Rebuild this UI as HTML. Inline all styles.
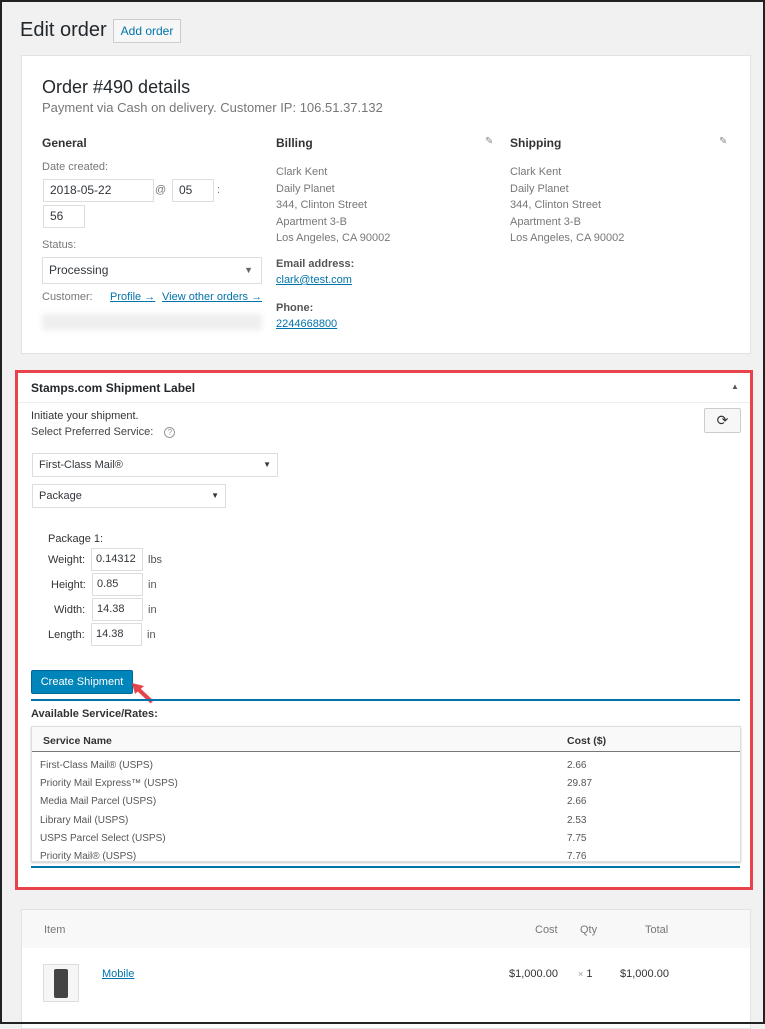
<!DOCTYPE html>
<html><head><meta charset="utf-8"><style>
*{margin:0;padding:0;box-sizing:border-box}
body{width:765px;height:1024px;background:#f1f1f1;font-family:"Liberation Sans",sans-serif;position:relative;overflow:hidden;color:#23282d}
.a{position:absolute;white-space:nowrap}
.card{position:absolute;background:#fff;border:1px solid #e2e2e2}
.in{position:absolute;border:1px solid #ddd;background:#fff;font-size:12px;padding-left:6px;line-height:20px;color:#32373c}
.g{color:#777;font-size:11px}
.lk{color:#0073aa;text-decoration:underline;font-size:11px}
.s{font-size:10px;color:#555}
</style></head><body>
<div class="a" style="left:20px;top:19px;font-size:20px;color:#23282d">Edit order</div>
<div class="a" style="left:113px;top:19px;width:68px;height:24px;border:1px solid #ccc;background:#f7f7f7;color:#0073aa;font-size:12px;text-align:center;line-height:22px">Add order</div>

<div class="card" style="left:21px;top:55px;width:730px;height:299px">
<div class="a" style="left:20px;top:21px;font-size:18px;color:#23282d">Order #490 details</div>
<div class="a" style="left:20px;top:44px;font-size:13px;color:#777">Payment via Cash on delivery. Customer IP: 106.51.37.132</div>
<div class="a" style="left:20px;top:80px;font-size:12px;font-weight:bold;color:#333">General</div>
<div class="a g" style="left:20px;top:105px">Date created:</div>
<div class="in" style="left:21px;top:123px;width:111px;height:23px">2018-05-22</div>
<div class="a g" style="left:133px;top:128px">@</div>
<div class="in" style="left:150px;top:123px;width:42px;height:23px">05</div>
<div class="a g" style="left:195px;top:128px">:</div>
<div class="in" style="left:21px;top:149px;width:42px;height:23px">56</div>
<div class="a g" style="left:20px;top:183px">Status:</div>
<div class="in" style="left:20px;top:201px;width:220px;height:27px;line-height:25px">Processing<span style="position:absolute;right:8px;font-size:9px;color:#666">▼</span></div>
<div class="a g" style="left:20px;top:235px">Customer:</div>
<div class="a lk" style="left:88px;top:235px">Profile →</div>
<div class="a lk" style="left:140px;top:235px">View other orders →</div>
<div class="a" style="left:20px;top:258px;width:220px;height:16px;background:#eee;filter:blur(3px)"></div>
<div class="a" style="left:254px;top:80px;font-size:12px;font-weight:bold;color:#333">Billing</div>
<div class="a" style="left:463px;top:80px;font-size:10px;color:#888">✎</div>
<div class="a g" style="left:254px;top:108px;line-height:16.5px">Clark Kent<br>Daily Planet<br>344, Clinton Street<br>Apartment 3-B<br>Los Angeles, CA 90002</div>
<div class="a" style="left:254px;top:202px;font-size:11px;font-weight:bold;color:#555">Email address:</div>
<div class="a lk" style="left:254px;top:218px">clark@test.com</div>
<div class="a" style="left:254px;top:246px;font-size:11px;font-weight:bold;color:#555">Phone:</div>
<div class="a lk" style="left:254px;top:262px">2244668800</div>
<div class="a" style="left:488px;top:80px;font-size:12px;font-weight:bold;color:#333">Shipping</div>
<div class="a" style="left:697px;top:80px;font-size:10px;color:#888">✎</div>
<div class="a g" style="left:488px;top:108px;line-height:16.5px">Clark Kent<br>Daily Planet<br>344, Clinton Street<br>Apartment 3-B<br>Los Angeles, CA 90002</div>
</div>

<div class="a" style="left:15px;top:370px;width:738px;height:520px;border:3px solid #e8434b;background:#fff"></div>
<div class="a" style="left:18px;top:402px;width:732px;height:1px;background:#eee"></div>
<div class="a" style="left:31px;top:381px;font-size:12px;font-weight:bold;color:#23282d">Stamps.com Shipment Label</div>
<div class="a" style="left:731px;top:382px;font-size:8px;color:#555">▲</div>
<div class="a" style="left:31px;top:410px;font-size:11px;color:#333">Initiate your shipment.</div>
<div class="a" style="left:31px;top:426px;font-size:11px;color:#444">Select Preferred Service: <span style="display:inline-block;width:11px;height:11px;border:1px solid #999;border-radius:50%;font-size:8px;text-align:center;line-height:10px;color:#999;margin-left:8px">?</span></div>
<div class="a" style="left:704px;top:408px;width:37px;height:25px;border:1px solid #ccc;background:#f7f7f7;border-radius:2px;text-align:center;line-height:23px;font-size:14px;color:#333">⟳</div>
<div class="in" style="left:32px;top:453px;width:246px;height:24px;line-height:22px;font-size:11px">First-Class Mail®<span style="position:absolute;right:6px;font-size:8px">▼</span></div>
<div class="in" style="left:32px;top:484px;width:194px;height:24px;line-height:22px;font-size:11px">Package<span style="position:absolute;right:6px;font-size:8px">▼</span></div>
<div class="a" style="left:48px;top:533px;font-size:11px;color:#333">Package 1:</div>
<div class="a" style="left:48px;top:554px;font-size:11px;color:#333">Weight:</div>
<div class="in" style="left:91px;top:548px;width:52px;height:23px;padding-left:4px;font-size:11px">0.14312</div>
<div class="a" style="left:148px;top:554px;font-size:11px;color:#555">lbs</div>
<div class="a" style="left:51px;top:579px;font-size:11px;color:#333">Height:</div>
<div class="in" style="left:92px;top:573px;width:51px;height:23px;padding-left:4px;font-size:11px">0.85</div>
<div class="a" style="left:148px;top:579px;font-size:11px;color:#555">in</div>
<div class="a" style="left:54px;top:604px;font-size:11px;color:#333">Width:</div>
<div class="in" style="left:92px;top:598px;width:51px;height:23px;padding-left:4px;font-size:11px">14.38</div>
<div class="a" style="left:148px;top:604px;font-size:11px;color:#555">in</div>
<div class="a" style="left:48px;top:629px;font-size:11px;color:#333">Length:</div>
<div class="in" style="left:91px;top:623px;width:51px;height:23px;padding-left:4px;font-size:11px">14.38</div>
<div class="a" style="left:147px;top:629px;font-size:11px;color:#555">in</div>
<div class="a" style="left:31px;top:670px;width:102px;height:24px;background:#0085ba;border:1px solid #006799;border-radius:2px;color:#fff;font-size:11px;text-align:center;line-height:22px">Create Shipment</div>
<svg class="a" style="left:128px;top:680px" width="26" height="24"><path d="M24 22 L10 9" stroke="#e8434b" stroke-width="4"/><path d="M4 3 L16 6 L7 14Z" fill="#e8434b"/></svg>
<div class="a" style="left:31px;top:699px;width:709px;height:2px;background:#0073aa"></div>
<div class="a" style="left:31px;top:708px;font-size:11px;font-weight:bold;color:#333">Available Service/Rates:</div>
<div class="a" style="left:31px;top:726px;width:710px;height:136px;border:1px solid #ddd;box-shadow:0 1px 2px #ccc;background:#fff">
<div class="a" style="left:0;top:0;width:708px;height:25px;background:#f9f9f9;border-bottom:1px solid #777"></div>
<div class="a" style="left:11px;top:8px;font-size:10.5px;font-weight:bold;color:#333">Service Name</div>
<div class="a" style="left:535px;top:8px;font-size:10.5px;font-weight:bold;color:#333">Cost ($)</div>
<div class="a s" style="left:8px;top:30px;line-height:18.2px">First-Class Mail® (USPS)<br>Priority Mail Express™ (USPS)<br>Media Mail Parcel (USPS)<br>Library Mail (USPS)<br>USPS Parcel Select (USPS)<br>Priority Mail® (USPS)</div>
<div class="a s" style="left:535px;top:30px;line-height:18.2px">2.66<br>29.87<br>2.66<br>2.53<br>7.75<br>7.76</div>
</div>
<div class="a" style="left:31px;top:866px;width:709px;height:2px;background:#0073aa"></div>

<div class="card" style="left:21px;top:909px;width:730px;height:120px">
<div class="a" style="left:0;top:0;width:728px;height:38px;background:#f8f8f8"></div>
<div class="a g" style="left:22px;top:14px">Item</div>
<div class="a g" style="left:513px;top:14px">Cost</div>
<div class="a g" style="left:558px;top:14px">Qty</div>
<div class="a g" style="left:623px;top:14px">Total</div>
<div class="a" style="left:21px;top:54px;width:36px;height:38px;border:1px solid #ddd;background:#f6f6f6"><div style="margin:4px auto;width:14px;height:29px;background:#444;border-radius:2px"></div></div>
<div class="a lk" style="left:80px;top:58px">Mobile</div>
<div class="a" style="left:487px;top:58px;font-size:11px;color:#333">$1,000.00</div>
<div class="a" style="left:556px;top:58px;font-size:11px;color:#333"><span style="color:#999;font-size:9px">×</span> 1</div>
<div class="a" style="left:598px;top:58px;font-size:11px;color:#333">$1,000.00</div>
</div>
<div class="a" style="left:0;top:0;width:765px;height:1024px;border:2px solid #222"></div>
</body></html>
